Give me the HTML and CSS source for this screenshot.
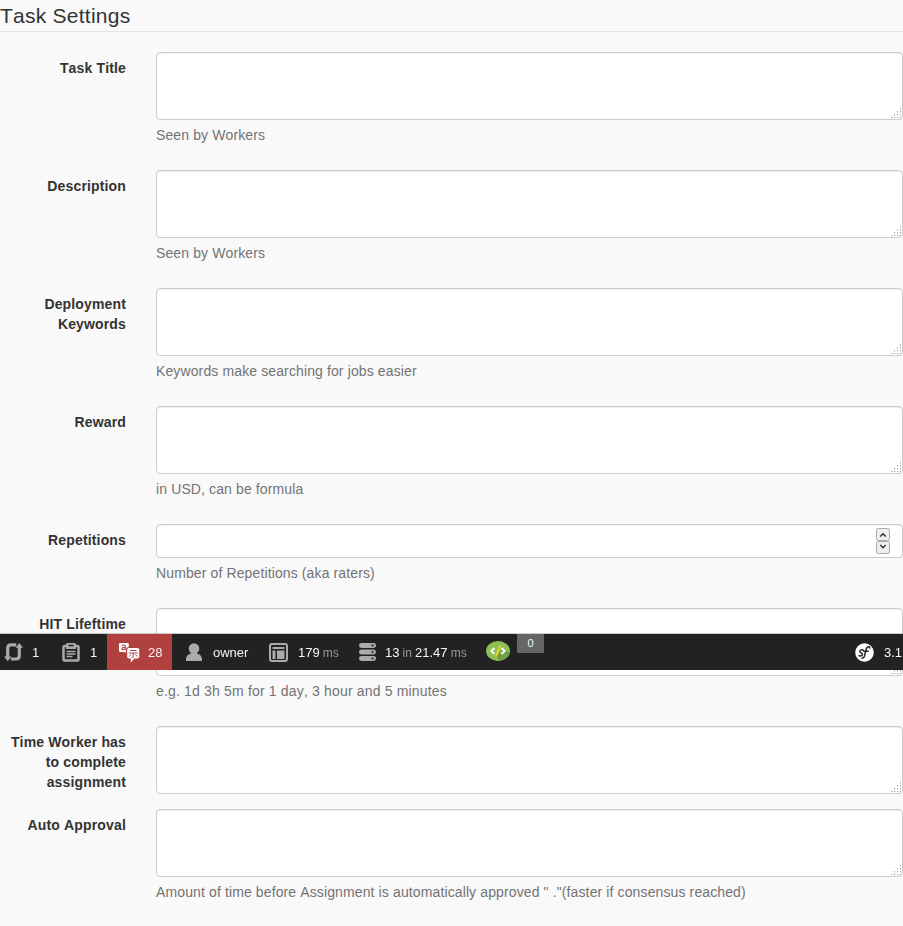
FILE: index.html
```html
<!DOCTYPE html>
<html lang="en">
<head>
<meta charset="utf-8">
<title>Task Settings</title>
<link rel="stylesheet" href="styles.css">
</head>
<body>
<svg width="0" height="0" class="defs">
  <symbol id="grip" viewBox="0 0 10 10"><path fill="#aaa" d="M9 0h1v1H9zM6 3h1v1H6zM9 3h1v1H9zM3 6h1v1H3zM6 6h1v1H6zM9 6h1v1H9zM0 9h1v1H0zM3 9h1v1H3zM6 9h1v1H6zM9 9h1v1H9z"/><path fill="#d8d8d8" d="M9 1h1v1H9zM6 4h1v1H6zM9 4h1v1H9zM3 7h1v1H3zM6 7h1v1H6zM9 7h1v1H9zM1 9h1v1H1zM4 9h1v1H4zM7 9h1v1H7z"/></symbol>
</svg>
<form>
  <h2 class="legend">Task Settings</h2>
  <div class="group"><label for="f1">Task Title</label><div class="field"><div class="area"><textarea id="f1"></textarea><svg class="grip"><use href="#grip"/></svg></div><p class="help">Seen by Workers</p></div></div>
  <div class="group"><label for="f2">Description</label><div class="field"><div class="area"><textarea id="f2"></textarea><svg class="grip"><use href="#grip"/></svg></div><p class="help">Seen by Workers</p></div></div>
  <div class="group"><label for="f3">Deployment Keywords</label><div class="field"><div class="area"><textarea id="f3"></textarea><svg class="grip"><use href="#grip"/></svg></div><p class="help">Keywords make searching for jobs easier</p></div></div>
  <div class="group"><label for="f4">Reward</label><div class="field"><div class="area"><textarea id="f4"></textarea><svg class="grip"><use href="#grip"/></svg></div><p class="help">in USD, can be formula</p></div></div>
  <div class="group"><label for="f5">Repetitions</label><div class="field"><div class="area number"><input id="f5" type="text">
    <svg class="spin" viewBox="0 0 14 26"><g fill="#eee" stroke="#aaa"><rect x=".5" y=".5" width="13" height="12" rx="2"/><rect x=".5" y="13.5" width="13" height="12" rx="2"/></g><path d="M4.3 8.5 7 5.8l2.7 2.7M4.3 17 7 19.7 9.700 17" fill="none" stroke="#333" stroke-width="1.5"/></svg></div><p class="help">Number of Repetitions (aka raters)</p></div></div>
  <div class="group"><label for="f6">HIT Lifeftime</label><div class="field"><div class="area"><textarea id="f6"></textarea><svg class="grip"><use href="#grip"/></svg></div><p class="help wide">e.g. 1d 3h 5m for 1 day, 3 hour and 5 minutes</p></div></div>
  <div class="group"><label for="f7">Time Worker has to complete assignment</label><div class="field"><div class="area"><textarea id="f7"></textarea><svg class="grip"><use href="#grip"/></svg></div></div></div>
  <div class="group"><label for="f8">Auto Approval</label><div class="field"><div class="area"><textarea id="f8"></textarea><svg class="grip"><use href="#grip"/></svg></div><p class="help">Amount of time before Assignment is automatically approved " ."(faster if consensus reached)</p></div></div>
</form>

<div class="toolbar">
  <div class="item redirect">
    <svg width="19" height="20" viewBox="0 0 19 20"><g fill="none" stroke="#aaa" stroke-width="3.200"><path d="M3.700 15V6q0-3.200 3.200-3.200H12.300M15.300 5v8.800q0 3.200-3.200 3.200H7"/></g><path fill="#aaa" d="M0 14.500h7.500L3.700 19.300zM11.500 5.800H19L15.300 1z"/></svg>
    <span>1</span>
  </div>
  <div class="item forms">
    <svg width="18" height="20" viewBox="0 0 18 20"><rect x="1.500" y="4" width="15" height="14.500" rx="1" fill="none" stroke="#aaa" stroke-width="2.500"/><path fill="#aaa" d="M4 4V2.500Q4 1 5.500 1h7Q14 1 14 2.500V7H4z"/><path d="M6.500 3.500h5" stroke="#222" stroke-width="1.500"/><path d="M4.500 9.500h9M4.500 12h9M4.500 14.500h6" stroke="#aaa" stroke-width="1.500"/></svg>
    <span>1</span>
  </div>
  <div class="item translation">
    <svg width="21" height="21" viewBox="0 0 21 21"><path fill="#fff" d="M1.200 1H8.500q1.300 0 1.300 1.300V5Q7 5.200 7 8v2.500L4.500 10H1.200Q0 10 0 8.800V2.200Q0 1 1.200 1z"/><path d="M2.800 3.700Q4.800 2.300 6.300 3.600V7.800M6.300 5.200Q2.700 5.300 2.900 6.800T6.300 7" fill="none" stroke="#b0413e" stroke-width="1.100"/><path fill="#fff" d="M10 6h8.500q1.800 0 1.800 1.800v7q0 1.800-1.800 1.800h-3L11.800 20.500v-3.900H10q-1.800 0-1.800-1.800v-7Q8.200 6 10 6z"/><path d="M11 8.500h6.500M9.800 11h9M14.200 11v4.300H12.700M11.900 12.500l-1.700 2M16.500 12.500l1.700 2" fill="none" stroke="#b0413e"/></svg>
    <span>28</span>
  </div>
  <div class="item user">
    <svg width="16" height="18" viewBox="0 0 16 18"><circle cx="8" cy="5.500" r="5.300" fill="#aaa"/><path fill="#aaa" d="M5 8h6v2.500q4.700 1.200 5 5.500v2H0v-2q.3-4.300 5-5.500z"/></svg>
    <span>owner</span>
  </div>
  <div class="item time">
    <svg width="19" height="19" viewBox="0 0 19 19"><rect x="1" y="1" width="17" height="17" rx="2" fill="none" stroke="#aaa" stroke-width="2"/><path fill="#aaa" d="M3.500 4h12v2h-12zM3.500 7.500H6.500V16h-3zM8 7.500h7.500V16H8z"/></svg>
    <span>179 <small>ms</small></span>
  </div>
  <div class="item database">
    <svg width="17" height="18" viewBox="0 0 17 18"><g fill="#aaa"><rect y="0" width="17" height="5" rx="2.400"/><rect y="6.500" width="17" height="5" rx="2.400"/><rect y="13" width="17" height="5" rx="2.400"/></g><g fill="#222"><circle cx="13.500" cy="2.500" r="1.100"/><circle cx="13.500" cy="9" r="1.100"/><circle cx="13.500" cy="15.500" r="1.100"/></g></svg>
    <span>13 <small>in</small> 21.47 <small>ms</small></span>
  </div>
  <div class="item code">
    <svg width="24" height="20" viewBox="0 0 24 20"><ellipse cx="12" cy="10" rx="12" ry="10" fill="#8cc152"/><path fill="#719d43" d="m10 15 4 4.800q8-1.600 9.700-8L18.500 8z"/><path d="m8.500 7-3.300 3 3.300 3m7-6 3.300 3-3.300 3" fill="none" stroke="#fff" stroke-width="1.800"/><path d="m14 4.500-4 11" stroke="#f5d32b" stroke-width="1.700"/></svg>
  </div>
  <div class="count">0</div>
  <div class="item symfony">
    <svg width="19" height="19" viewBox="0 0 19 19"><circle cx="9.500" cy="9.500" r="9.300" fill="#fff"/><path d="M8.300 7.500Q7.900 6.400 6.300 6.900 4.200 7.700 5 9q.4.700 1.700 1.300 1.300.9.300 2-1.300 1.300-3 .3M14.800 4.900Q14.800 3.500 13.300 3.700 11.500 4.200 10.800 7.400L9.500 13Q8.800 15.500 6.900 15.300M9 8.200h4.200" fill="none" stroke="#222" stroke-width="1.500" stroke-linecap="round"/></svg>
    <span>3.1</span>
  </div>
</div>
</body>
</html>
```
FILE: styles.css
```css
* { box-sizing: border-box; }
body { margin: 0; height: 926px; overflow: hidden; background: #f9f9f9; color: #333; font: 14px/20px "Liberation Sans", Arial, sans-serif; font-kerning: none; }
.defs { position: absolute; }
.legend { margin: 0 0 20px; height: 32px; border-bottom: 1px solid #e5e5e5; font-size: 21px; font-weight: 400; line-height: 31px; letter-spacing: .25px; }
.group { display: flex; gap: 30px; margin-bottom: 15px; }
label { width: 126px; padding: 6px 0 0 10px; text-align: right; font-weight: 700; flex: none; letter-spacing: .15px; }
.field { flex: 1; }
.area { position: relative; height: 68px; }
.number { height: 34px; }
textarea, input { display: block; width: 100%; height: 100%; margin: 0; padding: 6px 12px; resize: none; border: 1px solid #ccc; border-radius: 4px; background: #fff; box-shadow: inset 0 1px 1px rgba(0,0,0,.075); }
.grip { position: absolute; right: 2px; bottom: 2px; width: 10px; height: 10px; shape-rendering: crispEdges; }
.spin { position: absolute; right: 13px; top: 4px; width: 14px; height: 26px; }
.help { margin: 5px 0 25px; color: #737373; white-space: nowrap; letter-spacing: .12px; }
.help.wide { letter-spacing: .17px; }
.group:has(.help) { margin-bottom: 0; }
.toolbar { position: fixed; left: 0; right: 0; top: 634px; height: 36px; display: flex; background: #222; color: #f5f5f5; box-shadow: 0 -1px 0 rgba(0,0,0,.2); font-size: 13px; line-height: 36px; white-space: nowrap; }
.item { display: flex; align-items: center; flex: none; }
.item span { padding-top: 2px; word-spacing: -.5px; }
.item small { font-size: 12px; color: #999; }
.redirect { width: 51px; padding-left: 4px; gap: 9px; }
.forms { width: 56px; padding-left: 11px; gap: 10px; }
.translation { width: 65px; padding-left: 12px; gap: 8px; background: #b0413e; }
.user { width: 87px; padding-left: 14px; gap: 11px; }
.time { width: 90px; padding-left: 10px; gap: 10px; }
.database { width: 126px; padding-left: 10px; gap: 9px; }
.code { width: 42px; padding-left: 11px; }
.code svg { margin-bottom: 2px; }
.count { width: 27px; height: 19px; background: #666; text-align: center; font-size: 11px; line-height: 19px; }
.symfony { margin-left: auto; gap: 10px; width: 48px; }
```
